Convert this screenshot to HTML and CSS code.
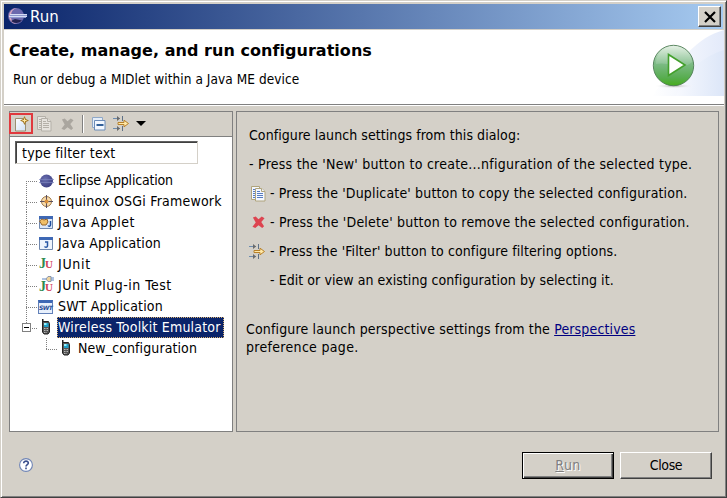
FILE: index.html
```
<!DOCTYPE html>
<html lang="en">
<head>
<meta charset="utf-8">
<title>Run</title>
<link rel="stylesheet" href="styles.css">
</head>
<body>
<svg class="defs" width="0" height="0" aria-hidden="true">
  <defs>
    <radialGradient id="globe" cx=".4" cy=".35" r=".7"><stop offset="0" stop-color="#6a70b0"/><stop offset="1" stop-color="#3a3d80"/></radialGradient>
    <linearGradient id="page" x1="0" y1="0" x2="1" y2="1"><stop offset="0" stop-color="#fff"/><stop offset="1" stop-color="#cfe0f5"/></linearGradient>
    <symbol id="filter" viewBox="0 0 16 16">
      <path d="M0 2.500h7M0 12.500h7" stroke="#6c8cb0"/>
      <path d="M4 0l3 2.500L4 5zM4 10l3 2.500L4 15z" fill="#6a6a6a"/>
      <path d="M9.500 0v5M9.500 10v5" stroke="#5f7186"/>
      <path d="M5 6.500h6v-2.300l4.500 3.300-4.500 3.300v-2.300h-6z" fill="#ffe9a8" stroke="#b8812a"/>
    </symbol>
    <symbol id="copy" viewBox="0 0 16 16">
      <path class="sheet" d="M1.500.5h8v13h-8z"/><path class="ink" d="M3 3.500h3M3 5.500h3M3 7.500h3M3 9.500h3M3 11.500h3"/>
      <path class="sheet" d="M5.500 2.500h6l3.500 3v9.500h-9.500z"/><path class="sheet" d="M11.500 2.500v3h3.500"/>
      <path class="ink" d="M7 5.500h3M7 7.500h6M7 9.500h6M7 11.500h6"/>
    </symbol>
    <symbol id="delete" viewBox="0 0 14 14">
      <path d="M1 1.500L4 .5 7 3.500 10.500.5 13.500 2.500 10 6.500 13 11 11 13 7 10 3.500 13 .5 11.500 4 7z"/>
    </symbol>
    <symbol id="phone" viewBox="0 0 10 16">
      <path d="M1 0h1.500v4H1z" fill="#222"/><path d="M1.500 2.500h6l1 2v8.500l-1.500 2h-4l-1.500-2z" fill="#555" stroke="#222"/>
      <path d="M3 4h4.500v4H3z" fill="#1f9fc8"/><path d="M3 4h2.500v2H3z" fill="#8ff0ff"/>
      <path d="M3 9.500h4M3 11.500h4M3 13.500h3" stroke="#b8b8b8" stroke-dasharray="1 .5"/>
    </symbol>
  </defs>
</svg>
<div class="window">
  <header class="titlebar">
    <svg class="logo" viewBox="0 0 20 18">
      <circle cx="9" cy="9" r="8" fill="#6b68ad"/><path d="M10 1a8 8 0 0 0 0 16A8 8 0 0 1 4 9a8 8 0 0 1 6-8z" fill="#d8a6c0"/>
      <path d="M4 14a8 8 0 0 0 11-.5L8 12z" fill="#24224f"/>
      <path d="M3 7.500h17M2 9.500h18" stroke="#d5dcf5"/><path d="M3 8.500h17M3 10.500h16" stroke="#8d96cc"/>
    </svg>
    <span class="caption">Run</span>
    <button class="close" aria-label="Close window"><svg viewBox="0 0 12 12"><path d="M1 1l10 10M11 1L1 11" stroke="#000" stroke-width="2.200"/></svg></button>
  </header>
  <section class="banner">
    <div class="banner-text">
      <h1>Create, manage, and run configurations</h1>
      <p>Run or debug a MIDlet within a Java ME device</p>
    </div>
    <svg class="banner-art" viewBox="0 0 80 66">
      <defs>
        <linearGradient id="swA" x1="0" x2="1"><stop offset="0" stop-color="#fff"/><stop offset="1" stop-color="#e3eafa"/></linearGradient>
        <linearGradient id="swB" x1="0" x2="1"><stop offset="0" stop-color="#f7f9fe"/><stop offset="1" stop-color="#dce6f8"/></linearGradient>
        <linearGradient id="orb" x1="0" y1="0" x2="0" y2="1"><stop offset="0" stop-color="#e2efe2"/><stop offset=".45" stop-color="#7dbb86"/><stop offset=".8" stop-color="#58ad50"/><stop offset="1" stop-color="#46ac1c"/></linearGradient>
        <radialGradient id="shade"><stop offset="0" stop-color="#aaa"/><stop offset="1" stop-color="#fff" stop-opacity="0"/></radialGradient>
      </defs>
      <path d="M80 0C52 8 38 28 8 66H80z" fill="url(#swA)"/>
      <path d="M80 20C55 28 42 42 32 66H80z" fill="url(#swB)"/>
      <ellipse cx="30" cy="56" rx="20" ry="2.500" fill="url(#shade)"/>
      <circle cx="29.500" cy="35.500" r="20.200" fill="url(#orb)" stroke="#4e7d55" stroke-width=".9"/>
      <path d="M12 34a18 17 0 0 1 36-2C40 41 25 31 12 34z" fill="#fff" opacity=".15"/>
      <path d="M24.500 24.500L41 35 24.500 45.500z" fill="#fff" stroke="#43a02c" stroke-width="1.600"/>
    </svg>
  </section>
  <main class="body">
    <aside class="left">
      <div class="toolbar">
        <span class="tool new"><svg width="16" height="16" viewBox="0 0 16 16"><path d="M2.500 2.500h7.500l2.500 2.500v10h-10z" fill="url(#page)" stroke="#9a8f70"/><path d="M11.500 0l1.500 3 3 1.500-3 1.500-1.500 3-1.500-3-3-1.500 3-1.500z" fill="#a77b28"/><path d="M11.500 2.500v4M9.500 4.500h4" stroke="#ffe9a0"/></svg></span>
        <svg class="dup off" width="16" height="16"><use href="#copy"/></svg>
        <svg class="del off" width="13" height="13"><use href="#delete"/></svg>
        <i class="sep"></i>
        <svg class="collapse" width="14" height="14" viewBox="0 0 14 14"><path d="M.5.500h10v10h-10z" fill="#e4edf8" stroke="#8fa8c8"/><path d="M2.500 3.500h10.500v9.500h-10.500z" fill="#f2f7ff" stroke="#6b8cb8"/><path d="M4.500 8h7" stroke="#003a80" stroke-width="1.600"/></svg>
        <svg class="flt" width="16" height="16"><use href="#filter"/></svg>
        <i class="arrow"></i>
      </div>
      <div class="left-body">
        <div class="search">type filter text</div>
        <ul class="tree">
          <li><i class="twig"></i><svg class="ico" viewBox="0 0 16 16"><circle cx="8.500" cy="8" r="6.500" fill="url(#globe)"/><path d="M1 6.500h15M1 9.500h15" stroke="#7d86bd" stroke-opacity=".7"/></svg><span class="t-eclipse">Eclipse Application</span></li>
          <li><i class="twig"></i><svg class="ico" viewBox="0 0 16 16"><circle cx="8.500" cy="7.500" r="5" fill="#f7d9a8" stroke="#a07a4a"/><path d="M8.500 1v13M2 7.500h13" stroke="#5a5060"/><circle cx="8.500" cy="7.500" r="2" fill="#d9903c"/></svg><span class="t-osgi">Equinox OSGi Framework</span></li>
          <li><i class="twig"></i><svg class="ico" viewBox="0 0 16 16"><path d="M1.500 1.500h13v12h-13z" fill="#dbe8fa" stroke="#7088ae"/><path d="M1 1h14v3H1z" fill="#3e68b5"/><path d="M1.500 6l2.500-2 2 1 3-1 1 3-2 3H4z" fill="#f0bf68" stroke="#96652c"/><path d="M12.500 6v4c0 1.500-2 1.500-2.500.5" fill="none" stroke="#1f4f9f" stroke-width="1.500"/></svg><span class="t-applet">Java Applet</span></li>
          <li><i class="twig"></i><svg class="ico" viewBox="0 0 16 16"><path d="M1.500 1.500h13v12h-13z" fill="#eef4fd" stroke="#7088ae"/><path d="M1 1h14v3H1z" fill="#3e68b5"/><path d="M7 6h2.500v4c0 1.500-2.500 1.500-3 .5" fill="none" stroke="#2857a5" stroke-width="1.500"/></svg><span class="t-java">Java Application</span></li>
          <li><i class="twig"></i><span class="ju"><b>J</b><b>U</b></span><span class="t-junit">JUnit</span></li>
          <li><i class="twig"></i><span class="ju plug"><b>J</b><b>U</b><svg viewBox="0 0 12 6"><path d="M0 3h4M9 2h3M9 4h3" stroke="#5c86c4"/><path d="M4 3l2-2.500h3v5H6z" fill="#f0d49c" stroke="#7284a5" stroke-width=".8"/></svg></span><span class="t-plug">JUnit Plug-in Test</span></li>
          <li><i class="twig"></i><span class="swt">SWT</span><span class="t-swt">SWT Application</span></li>
          <li class="open"><i class="twig"></i><i class="box"></i><svg class="phone" width="10" height="16"><use href="#phone"/></svg><span class="t-wtk">Wireless Toolkit Emulator</span></li>
          <li class="child"><i class="twig"></i><svg class="phone" width="10" height="16"><use href="#phone"/></svg><span class="t-new">New_configuration</span></li>
        </ul>
      </div>
    </aside>
    <section class="right">
      <p class="h-intro">Configure launch settings from this dialog:</p>
      <p class="h-new">- Press the 'New' button to create...nfiguration of the selected type.</p>
      <p class="h-dup"><span class="slot"><svg class="copy" width="16" height="16"><use href="#copy"/></svg></span>- Press the 'Duplicate' button to copy the selected configuration.</p>
      <p class="h-del"><span class="slot"><svg class="red" width="13" height="13"><use href="#delete"/></svg></span>- Press the 'Delete' button to remove the selected configuration.</p>
      <p class="h-flt"><span class="slot"><svg width="16" height="16"><use href="#filter"/></svg></span>- Press the 'Filter' button to configure filtering options.</p>
      <p class="h-edit"><span class="slot"></span>- Edit or view an existing configuration by selecting it.</p>
      <div class="note"><span>Configure launch perspective settings from the <a>Perspectives</a></span><br><span class="pref">preference page.</span></div>
    </section>
  </main>
  <footer class="footer">
    <svg class="help" width="14" height="14" viewBox="0 0 14 14"><circle cx="7" cy="7" r="6.400" fill="#fff" stroke="#6f84b5" stroke-width="1.100"/><path d="M4.700 5.300c0-3 4.800-2.800 4.600 0C9.200 6.600 7 6.800 7 8.500M7 9.500v1.800" fill="none" stroke="#3b4f8d" stroke-width="1.600"/></svg>
    <button class="btn run"><u>R</u>un</button>
    <button class="btn cls">Close</button>
  </footer>
</div>
</body>
</html>
```
FILE: styles.css
```
* { box-sizing: border-box; }
body { margin: 0; font: 14px/18px "DejaVu Sans Condensed", "DejaVu Sans", sans-serif; color: #000; white-space: nowrap; }
h1, p, ul { margin: 0; padding: 0; }
svg { display: block; flex: none; }
i { flex: none; }
button { padding: 0; border: 0; background: #d4d0c8; font: inherit; color: #000; }
.defs { position: absolute; }

.window { width: 727px; height: 498px; display: flex; flex-direction: column; padding: 2px 2px 0 2px; background: #d4d0c8; border: 1px solid; border-color: #d4d0c8 #404040 #404040 #d4d0c8; box-shadow: inset 1px 1px #fff, inset -1px -1px #808080; }
.titlebar { height: 26px; margin: 1px 0 0 1px; width: 719px; flex: none; display: flex; align-items: center; padding: 0 2px 0 3px; background: linear-gradient(90deg, #0a246a, #a6caf0); border-bottom: 1px solid #d4d0c8; }
.logo { width: 20px; height: 18px; margin-top: -1px; }
.caption { font: 15px/24px "DejaVu Sans", sans-serif; color: #fff; margin-left: 3px; flex: 1; }
.close { width: 23px; height: 21px; display: flex; align-items: center; justify-content: center; border: 1px solid; border-color: #fff #404040 #404040 #fff; box-shadow: inset -1px -1px #808080; }
.close svg { width: 12px; height: 12px; }

.banner { height: 76px; width: 720px; margin-left: 1px; flex: none; display: flex; justify-content: space-between; background: #fff; border-bottom: 1px solid #fff; box-shadow: inset 0 -1px #808080; }
.banner-text { padding: 11px 0 0 5px; }
.banner h1 { font: bold 16px/20px "DejaVu Sans", sans-serif; letter-spacing: .04px; }
.banner p { margin: 9px 0 0 4px; font-size: 13.5px; line-height: 18px; letter-spacing: .07px; }
.banner-art { width: 80px; height: 66px; }

.body { display: flex; gap: 3px; margin: 5px 0 0 6px; height: 321px; flex: none; }
.left { width: 224px; border: 1px solid #808080; background: #fff; }
.toolbar { height: 25px; display: flex; align-items: center; background: #d4d0c8; border-bottom: 1px solid #808080; }
.tool.new { width: 24px; height: 21px; margin: 0 0 1px -1px; display: flex; align-items: center; justify-content: center; border: 2px solid #e0393e; }
.dup { margin-left: 3px; }
.del { margin-left: 9px; fill: #aaa69f; }
.sep { width: 2px; height: 18px; margin-left: 8px; background: #808080; border-right: 1px solid #fff; }
.collapse { margin-left: 8px; }
.flt { margin-left: 7px; }
.arrow { margin: 0 0 2px 7px; border: 5px solid transparent; border-top-color: #000; border-bottom: 0; }
.sheet { fill: var(--sheet, #f3f7ff); stroke: var(--edge, #b0a47c); }
.ink { stroke: var(--ink, #587cc0); fill: none; }
.off { --sheet: #e6e3de; --edge: #b4b0a8; --ink: #b4b0a8; }
.red { fill: #dd4450; }

.left-body { padding: 4px 0 0 5px; }
.search { width: 183px; height: 23px; padding: 2px 0 0 6px; line-height: 18px; letter-spacing: .2px; border: 1px solid; border-color: #606060 #d4d0c8 #d4d0c8 #606060; box-shadow: inset 1px 1px #404040; }
.tree { list-style: none; margin-top: 6px; }
.tree li { height: 21px; display: flex; align-items: center; padding-left: 11px; position: relative; }
.twig { width: 12px; height: 21px; background: repeating-linear-gradient(90deg, #808080 0 1px, transparent 1px 2px) 0 11px / 12px 1px no-repeat, repeating-linear-gradient(0deg, #808080 0 1px, transparent 1px 2px) 0 0 / 1px 21px no-repeat; }
.tree li:first-child .twig { background-position: 0 11px, 0 11px; }
.open .twig { background: repeating-linear-gradient(90deg, #808080 0 1px, transparent 1px 2px) 0 11px / 12px 1px no-repeat, repeating-linear-gradient(0deg, #808080 0 1px, transparent 1px 2px) 0 0 / 1px 6px no-repeat; }
.tree .child .twig { background-size: 12px 1px, 1px 11px; }
.box { position: absolute; left: 7px; top: 6px; width: 9px; height: 9px; border: 1px solid #808080; background: linear-gradient(#000, #000) center / 5px 1px no-repeat #fff; }
.ico { width: 16px; height: 16px; }
.tree li span[class^="t-"] { padding: 0 2px 0 1px; margin-left: 3px; line-height: 21px; height: 21px; }
.ju { width: 16px; height: 18px; display: flex; align-items: flex-end; font: 14px/16px "Liberation Serif", serif; color: #2f8b50; padding: 0 0 2px 1px; position: relative; }
.ju b + b { color: #d24357; font-size: 11px; line-height: 15px; margin-left: -1px; }
.ju.plug { padding-bottom: 0; }
.ju svg { position: absolute; left: 4px; top: -1px; width: 12px; height: 6px; }
.swt { width: 15px; height: 14px; border: 1px solid #6280b8; border-top: 3px solid #3e68b5; background: #e8f0fc; font: italic bold 6px/10px "DejaVu Sans", sans-serif; color: #274d96; letter-spacing: -.6px; text-align: center; margin-right: 1px; }
.phone { margin: -1px 3px 0 3px; }
.tree .child { padding-left: 31px; }
.tree .t-wtk { background: #0a246a; color: #fff; outline: 1px dotted #d8b070; outline-offset: -1px; letter-spacing: .19px; padding-right: 3px !important; }
.t-eclipse { letter-spacing: -.2px; }
.t-osgi { letter-spacing: .22px; }
.t-applet { letter-spacing: .5px; }
.t-java { letter-spacing: .12px; }
.t-junit { letter-spacing: .7px; }
.t-plug { letter-spacing: .48px; }
.t-swt { letter-spacing: .15px; }
.t-new { letter-spacing: .1px; }

.right { width: 483px; border: 1px solid #808080; padding: 9px 0 0 9px; }
.right p { height: 29px; line-height: 29px; padding-left: 3px; display: flex; align-items: center; }
.slot { width: 21px; display: flex; justify-content: center; padding-right: 3px; flex: none; }
.h-flt .slot { padding-right: 5px; }
.h-intro { letter-spacing: .07px; }
.h-new { letter-spacing: .25px; }
.h-dup { letter-spacing: .16px; }
.h-del { letter-spacing: .21px; }
.h-flt { letter-spacing: .11px; }
.h-edit { letter-spacing: .06px; }
.note { margin-top: 25px; letter-spacing: .15px; }
.note a { color: #000080; text-decoration: underline; }
.pref { letter-spacing: .31px; }

.footer { display: flex; align-items: flex-start; padding: 20px 0 0 16px; }
.help { margin: 6px 489px 0 0; }
.btn { width: 92px; height: 27px; line-height: 23px; border: 1px solid; border-color: #fff #404040 #404040 #fff; box-shadow: inset -1px -1px #808080; letter-spacing: -.4px; margin-right: 6px; }
.btn.run { border-color: #000; box-shadow: inset 1px 1px #fff, inset -1px -1px #404040, inset -2px -2px #808080; color: #808080; text-shadow: 1px 1px #fff; letter-spacing: .4px; }
```
